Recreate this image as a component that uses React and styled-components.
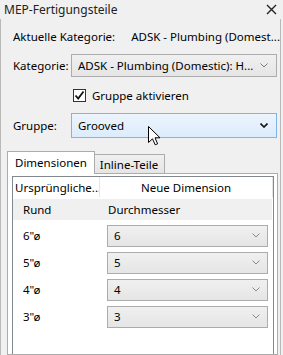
import React from 'react';
import styled, { createGlobalStyle } from 'styled-components';

const GlobalStyle = createGlobalStyle`
  html, body {
    margin: 0;
    padding: 0;
    background: #f0f0f0;
  }
  body {
    font-family: 'Noto Sans', 'Open Sans', sans-serif;
    font-size: 11.5px;
    color: #000;
  }
`;

const rows = [
  { id: 6, label: '6"ø', value: '6' },
  { id: 5, label: '5"ø', value: '5' },
  { id: 4, label: '4"ø', value: '4' },
  { id: 3, label: '3"ø', value: '3' },
];

const Chevron = ({ color = '#7a7a7a', weight = 1 }) => (
  <svg width="8" height="5" viewBox="0 0 8 5">
    <polyline points="0.5,0.5 4,4 7.5,0.5" fill="none" stroke={color} strokeWidth={weight} />
  </svg>
);

const App = () => {
  return (
    <Window>
      <GlobalStyle />
      <TitleBar>
        <span>MEP-Fertigungsteile</span>
        <svg width="11" height="11" viewBox="0 0 11 11">
          <path d="M1 1 L10 10 M10 1 L1 10" stroke="#222" strokeWidth="1.4" />
        </svg>
      </TitleBar>
      <Body>
        <InfoRow>
          <span>Aktuelle Kategorie:</span>
          <Value>ADSK - Plumbing (Domest...</Value>
        </InfoRow>
        <FieldRow>
          <Label>Kategorie:</Label>
          <Select>
            <SelectText>ADSK - Plumbing (Domestic): H...</SelectText>
            <Chevron />
          </Select>
        </FieldRow>
        <CheckRow>
          <Box>
            <svg width="11" height="11" viewBox="0 0 11 11">
              <path d="M1.5 5.5 L4.2 8.5 L9.5 1.5" fill="none" stroke="#111" strokeWidth="1.8" />
            </svg>
          </Box>
          <span>Gruppe aktivieren</span>
        </CheckRow>
        <FieldRow $tall>
          <Label>Gruppe:</Label>
          <Select $hover>
            <SelectText>Grooved</SelectText>
            <Chevron color="#111" weight={1.6} />
          </Select>
        </FieldRow>
        <Tabs>
          <TabStrip>
            <Tab $active>Dimensionen</Tab>
            <Tab>Inline-Teile</Tab>
          </TabStrip>
          <TabPanel>
            <Grid>
              <HeaderRow>
                <HeaderCell>Ursprüngliche...</HeaderCell>
                <HeaderCell $center>Neue Dimension</HeaderCell>
              </HeaderRow>
              <GroupRow>
                <FirstCell>Rund</FirstCell>
                <SecondCell>Durchmesser</SecondCell>
              </GroupRow>
              <RowList>
                {rows.map((r) => (
                  <DataRow key={r.id}>
                    <FirstCell>{r.label}</FirstCell>
                    <RowSelect>
                      <span>{r.value}</span>
                      <Chevron color="#8a8a8a" />
                    </RowSelect>
                  </DataRow>
                ))}
              </RowList>
            </Grid>
          </TabPanel>
        </Tabs>
      </Body>
      <Cursor width="13" height="20" viewBox="0 0 13 20">
        <path
          d="M0.5 0.5 L0.5 16.5 L4.5 12.8 L7.2 18.8 L9.6 17.8 L7 11.8 L12 11.8 Z"
          fill="#fff"
          stroke="#000"
          strokeWidth="1"
        />
      </Cursor>
    </Window>
  );
};

const Window = styled.div`
  position: relative;
  width: 283px;
  height: 355px;
  overflow: hidden;
  background: #f0f0f0;
`;

const TitleBar = styled.div`
  height: 19px;
  display: flex;
  align-items: center;
  justify-content: space-between;
  padding: 0 6px 0 4px;
  color: #222;
  font-size: 12px;
`;

const Body = styled.div`
  width: 279px;
  height: 336px;
  border-left: 1px solid #b9b9b9;
  border-right: 1px solid #b9b9b9;
  display: flex;
  flex-direction: column;
`;

const InfoRow = styled.div`
  display: flex;
  align-items: center;
  gap: 16px;
  height: 20px;
  margin-top: 7px;
  padding-left: 12px;
  white-space: nowrap;
`;

const Value = styled.span`
  overflow: hidden;
`;

const FieldRow = styled.div`
  display: flex;
  align-items: center;
  height: ${(p) => (p.$tall ? 25 : 23)}px;
  margin-top: ${(p) => (p.$tall ? 11 : 8)}px;
  padding-left: 12px;
`;

const Label = styled.span`
  width: 58px;
`;

const Select = styled.div`
  box-sizing: border-box;
  width: 206px;
  height: 100%;
  display: flex;
  align-items: center;
  justify-content: space-between;
  padding: 0 8px 0 6px;
  border: 1px solid ${(p) => (p.$hover ? '#7eb4ea' : '#acacac')};
  background: ${(p) =>
    p.$hover
      ? 'linear-gradient(#ecf4fc, #dcecfc)'
      : 'linear-gradient(#f0f0f0, #e5e5e5)'};
`;

const SelectText = styled.span`
  white-space: nowrap;
  overflow: hidden;
`;

const CheckRow = styled.div`
  display: flex;
  align-items: center;
  gap: 6px;
  height: 13px;
  margin-top: 12px;
  padding-left: 72px;
`;

const Box = styled.div`
  box-sizing: border-box;
  width: 13px;
  height: 13px;
  border: 1px solid #333;
  background: #fff;
  display: flex;
  align-items: center;
  justify-content: center;
`;

const Tabs = styled.div`
  margin-top: 14px;
  padding-left: 6px;
  flex: 1;
  display: flex;
  flex-direction: column;
`;

const TabStrip = styled.div`
  display: flex;
  align-items: flex-end;
  height: 22px;
  margin-bottom: -1px;
  position: relative;
  z-index: 1;
`;

const Tab = styled.div`
  box-sizing: border-box;
  height: ${(p) => (p.$active ? 23 : 20)}px;
  display: flex;
  align-items: center;
  padding: ${(p) => (p.$active ? '0 7px 2px 7px' : '0 6px 0 5px')};
  border: 1px solid #acacac;
  border-bottom: ${(p) => (p.$active ? 'none' : '1px solid #acacac')};
  border-left: ${(p) => (p.$active ? '1px solid #acacac' : 'none')};
  background: ${(p) => (p.$active ? '#fff' : 'linear-gradient(#f0f0f0, #e5e5e5)')};
`;

const TabPanel = styled.div`
  box-sizing: border-box;
  width: 271px;
  flex: 1;
  border: 1px solid #acacac;
  background: #fff;
  padding: 2px 3px 0 4px;
`;

const Grid = styled.div`
  box-sizing: border-box;
  height: 100%;
  border: 1px solid #828790;
  border-bottom: none;
  background: #fff;
`;

const HeaderRow = styled.div`
  display: grid;
  grid-template-columns: 87px 1fr;
  height: 20px;
`;

const HeaderCell = styled.div`
  display: flex;
  align-items: center;
  justify-content: ${(p) => (p.$center ? 'center' : 'flex-start')};
  padding-left: ${(p) => (p.$center ? 0 : 2)}px;
  border-right: 1px solid #e5e5e5;
  white-space: nowrap;
  overflow: hidden;
`;

const GroupRow = styled.div`
  display: grid;
  grid-template-columns: 87px 1fr;
  align-items: center;
  height: 21px;
  margin: 2px 1px 0 0;
  background: #f0f0f0;
`;

const FirstCell = styled.div`
  padding-left: 10px;
`;

const SecondCell = styled.div`
  padding-left: 8px;
`;

const RowList = styled.div`
  padding-top: 2px;
`;

const DataRow = styled.div`
  display: grid;
  grid-template-columns: 94px 161px;
  align-items: center;
  height: 27px;
`;

const RowSelect = styled.div`
  box-sizing: border-box;
  height: 22px;
  display: flex;
  align-items: center;
  justify-content: space-between;
  padding: 0 7px 0 6px;
  border: 1px solid #acacac;
  background: linear-gradient(#f0f0f0, #e5e5e5);
`;

const Cursor = styled.svg`
  position: absolute;
  left: 148px;
  top: 126px;
`;

export default App;
